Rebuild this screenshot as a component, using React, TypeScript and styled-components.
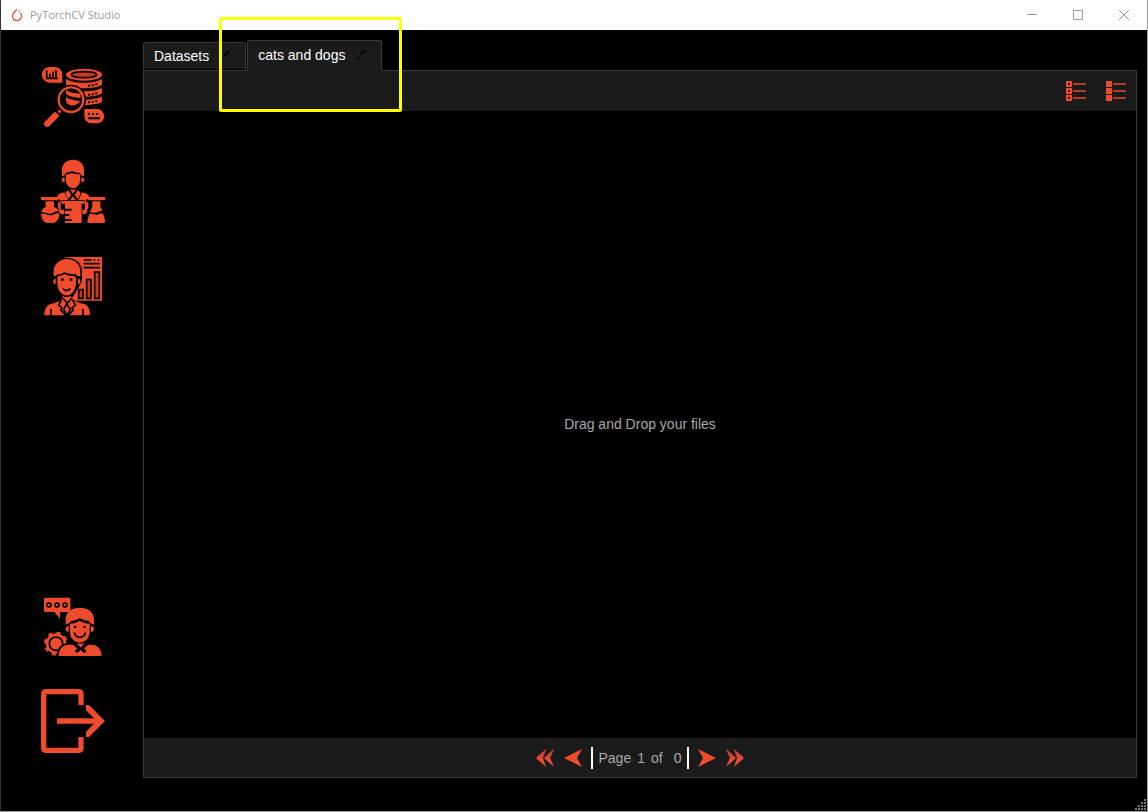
import React from "react";
import styled, { createGlobalStyle } from "styled-components";

const accent = "#ee4c2c";
const panel = "#1b1b1b";
const line = "#3a3a3a";

const GlobalStyle = createGlobalStyle`
  * { box-sizing: border-box; }
  body { margin: 0; background: #000; font-family: "Liberation Sans", Arial, sans-serif; font-size: 14px; }
  button { font: inherit; color: inherit; background: none; border: 0; padding: 0; cursor: pointer; }
  svg { display: block; }
`;

const Window = styled.div`
  position: relative;
  min-height: 100vh;
  display: flex;
  flex-direction: column;
  background: #000;
  border: 1px solid #a0a0a0;
  border-top: 0;
  border-left-color: #333;
`;

const TitleBar = styled.header`
  height: 30px;
  display: flex;
  align-items: center;
  gap: 7px;
  padding-left: 10px;
  background: #fff;
  color: #999;
`;

const Title = styled.h1`
  flex: 1;
  margin: 0;
  font: 400 11px/16px "Open Sans", "Segoe UI", sans-serif;
`;

const WindowButton = styled.button`
  width: 46px;
  height: 30px;
  display: grid;
  place-items: center;
`;

const WindowButtons = styled.div`
  display: flex;
`;

const Body = styled.div`
  flex: 1;
  display: flex;
`;

const Sidebar = styled.nav`
  width: 142px;
  display: flex;
  flex-direction: column;
  justify-content: space-between;
  padding: 35px 38px 58px 40px;
`;

const NavGroup = styled.div`
  display: flex;
  flex-direction: column;
  gap: 30px;
`;

const NavButton = styled.button`
  width: 64px;
  height: 64px;
`;

const Main = styled.main`
  flex: 1;
  display: flex;
  flex-direction: column;
  padding: 10px 10px 33px 0;
`;

const Tabs = styled.div`
  display: flex;
  align-items: flex-end;
  gap: 1px;
`;

const Tab = styled.div<{ $active?: boolean }>`
  position: relative;
  z-index: 1;
  display: flex;
  align-items: center;
  height: ${(p) => (p.$active ? 31 : 28)}px;
  margin-bottom: ${(p) => (p.$active ? -1 : 0)}px;
  padding: 0 14px ${(p) => (p.$active ? 2 : 0)}px 10px;
  gap: 10px;
  color: #fff;
  background: ${panel};
  border: 1px solid ${line};
  border-bottom-color: ${(p) => (p.$active ? panel : "#000")};
  border-radius: 2px 2px 0 0;
`;

const TabLabel = styled.button`
  line-height: 16px;
`;

const Pane = styled.section`
  flex: 1;
  display: flex;
  flex-direction: column;
  border: 1px solid ${line};
`;

const Toolbar = styled.div`
  height: 40px;
  display: flex;
  align-items: center;
  justify-content: flex-end;
  gap: 20px;
  padding-right: 10px;
  background: ${panel};
`;

const IconButton = styled.button`
  width: 20px;
  height: 20px;
`;

const DropArea = styled.div`
  flex: 1;
  display: grid;
  place-items: center;
  padding-bottom: 2px;
  color: #a9a9a9;
`;

const Pager = styled.footer`
  height: 39px;
  display: flex;
  align-items: center;
  justify-content: center;
  gap: 8px;
  background: ${panel};
  color: #a9a9a9;
`;

const PagerText = styled.div`
  display: flex;
  gap: 6px;
  height: 22px;
  align-items: center;
  padding: 0 6px;
  border: solid #fff;
  border-width: 0 2px;
`;

const Total = styled.span`
  padding-left: 5px;
`;

const Highlight = styled.div`
  position: absolute;
  z-index: 2;
  left: 218px;
  top: 17px;
  width: 183px;
  height: 95px;
  border: 3px solid #ff0;
  border-radius: 2px;
  pointer-events: none;
`;

const Grip = styled.svg`
  position: absolute;
  right: 0;
  bottom: 0;
`;

const Art = ({ box, children }: { box: string; children: React.ReactNode }) => (
  <svg width="64" height="64" viewBox={box} fill={accent} aria-hidden="true">
    {children}
  </svg>
);

const DatasetIcon = () => (
  <Art box="33 30 192 192">
    <path d="M59 36h15a23 23 0 0 1 23 23v24H59a23 23 0 0 1 0-47z" />
    <path d="M50 46v24h34M60 68V56M69 68V50M78 68V46" stroke="#000" strokeWidth="5" fill="none" />
    <ellipse cx="162" cy="59" rx="54" ry="18" />
    <ellipse cx="162" cy="59" rx="38" ry="9" fill="#c43b22" stroke="#000" strokeWidth="5" />
    <path d="M108 71c20 16 88 16 108 0v18c-16 13-92 16-108 0z" />
    <path d="M108 98c20 14 88 14 108 0v17c-16 13-92 16-108 0z" />
    <path d="M108 124c20 14 88 14 108 0v16c-16 12-92 15-108 0z" />
    <path d="M174 92h6M185 91h6M196 88h6M174 119h6M185 118h6M196 115h6M174 142h6M185 141h6M196 138h6" stroke="#000" strokeWidth="6" />
    <circle cx="123" cy="134" r="45" fill="#000" />
    <path d="M108 104c10 8 24 11 44 12v13c-18-1-34-4-44-12zM108 126c10 8 26 11 43 12-8 12-20 15-30 13-8-3-13-8-13-13z" />
    <circle cx="123" cy="134" r="37" fill="none" stroke={accent} strokeWidth="7" />
    <path d="M84 174l7-7" stroke={accent} strokeWidth="9" />
    <path d="M52 206l25-25" stroke={accent} strokeWidth="19" strokeLinecap="round" />
    <path d="M76 166l16 16" stroke="#000" strokeWidth="5" />
    <path d="M163 162h38a21 21 0 0 1 0 43h-17a21 21 0 0 1-21-21z" />
    <path d="M174 177h6M186 177h6M198 177h6M174 190h36" stroke="#000" strokeWidth="6" />
  </Art>
);

const ExperimentIcon = () => (
  <Art box="33 27 192 192">
    <path d="M96 79V59c0-18 14-30 33-30s33 12 33 30v20l-9-3-4-8c-10 0-18-2-23-6-5 4-10 6-18 6l-4 8z" />
    <path d="M108 73c7 0 13-2 18-5 6 4 13 5 24 5v19c0 12-10 22-21 22s-21-10-21-22zM104 82v14c-6 0-9-3-9-7s3-7 9-7zM154 82v14c6 0 9-3 9-7s-3-7-9-7z" />
    <path d="M119 116c6 4 14 4 20 0l-10 15zM114 120l10 15-10 13-8-18zM144 120l-10 15 10 13 8-18zM129 138l8 12h-16z" />
    <path d="M81 140c3-7 11-11 22-13l11 24H92v28h10v14c-10 1-18-7-14-13l-4-6V157h6v-9h-9zM178 140c-3-7-11-11-22-13l-11 24h20v28h-8v14c10 1 18-7 14-13l4-6V157h-6v-9h9z" />
    <path d="M94 153h70v8h-9v59h-50v-7h20v-6h-20v-9h13v-6h-13v-10h20v-6h-20v-15H94z" />
    <path d="M33 141h52v10H33zM175 141h50v10h-50z" />
    <path d="M47 154h25v17c8 2 13 7 16 13-12-4-18 10-30 7-8-1-13-6-24-4 2-9 7-14 13-16z" />
    <path d="M34 191c12-3 17 5 27 5 11 0 15-9 27-6 1 17-9 31-27 31s-28-13-27-30z" />
    <path d="M187 154h24v16l7 14c-12-4-15 7-24 4l-14-1 7-17zM178 192c14-4 18 6 29 0 7-4 12-2 14 3l4 16c2 6-2 10-8 10h-37c-6 0-9-4-8-10z" />
  </Art>
);

const AnalysisIcon = () => (
  <Art box="33 24 192 192">
    <path d="M103 36h113v131H103z" />
    <path d="M161 45h24M191 45h5M203 45h5M161 56h48M161 68h48" stroke="#000" strokeWidth="5" />
    <path d="M146 134h13v26h-13zM170 104h13v56h-13zM194 81h14v79h-14z" stroke="#000" strokeWidth="5" fill="#c43b22" />
    <path d="M66 106V78c0-24 20-40 44-40s46 14 46 42v28l-11 20-17 29H96l-24-34z" fill="#000" />
    <path d="M71 94V78c0-21 18-36 40-36s40 15 40 36v16c-9 0-11-3-14-7-13 2-26-1-34-6-7 6-13 8-21 7-3 3-6 6-11 6z" />
    <path d="M84 93c8 0 14-2 20-6 9 5 19 7 29 6l5 6v20c-2 17-14 32-28 32s-27-15-28-32v-20zM77 101v17c-10-1-10-16 0-17zM144 101v17c10-1 10-16 0-17z" />
    <path d="M93 104h8M119 104h8" stroke="#000" strokeWidth="7" />
    <path d="M99 130c5 9 17 9 22 0" stroke="#000" strokeWidth="5" fill="none" />
    <path d="M43 211c0-23 10-34 28-36l20-8 8-10 12 10 12-10 8 10 22 8c18 2 27 13 27 36z" />
    <path d="M98 151c8 9 18 9 25 0l2 11-14 14-14-14z" />
    <path d="M63 192v20M159 192v20M94 164l-8 17 10 7-4 7 17 17M128 164l8 17-10 7 4 7-17 17M98 159l14 16 14-16M110 176l-9 18 10 17 10-17z" stroke="#000" strokeWidth="5" fill="none" />
  </Art>
);

const SupportIcon = () => (
  <Art box="33 30 192 192">
    <path d="M45 38h73q3 0 3 3v37q0 3-3 3H90v20L73 81H45q-3 0-3-3V41q0-3 3-3z" />
    <g fill="none" stroke="#000" strokeWidth="5">
      <circle cx="57" cy="60" r="6" />
      <circle cx="81" cy="60" r="6" />
      <circle cx="105" cy="60" r="6" />
    </g>
    <circle cx="78" cy="176" r="31" />
    <circle cx="78" cy="176" r="33" fill="none" stroke={accent} strokeWidth="6" strokeDasharray="13 13" />
    <circle cx="78" cy="176" r="20" fill="none" stroke="#000" strokeWidth="5" />
    <path d="M80 217c0-25 9-39 34-44l8-17h54l10 17c24 4 33 19 34 44z" fill="#000" />
    <path d="M107 119v-16c0-22 18-35 42-35s43 13 43 35v16l-12-5-4-7c-10 0-21-3-27-8-6 5-14 8-24 8l-7 7z" />
    <path d="M120 116c10-1 21-3 29-9 9 6 19 8 30 9v26c0 17-14 31-30 31s-29-14-29-31zM116 123v18c-12 0-12-18 0-18zM183 123v18c12 0 12-18 0-18z" />
    <path d="M132 126h7M160 126h7" stroke="#000" strokeWidth="6" />
    <path d="M133 142c4 20 29 20 33 0" stroke="#000" strokeWidth="5" fill="none" />
    <path d="M86 213c1-21 11-34 29-34h15l12 12-8 8 8 5 10-10 10 10 8-5-8-8 12-12h10c18 0 30 12 31 34z" />
    <path d="M139 173c8 4 16 4 24 0l-10 15z" />
  </Art>
);

const ExitIcon = () => (
  <Art box="33 33 192 192">
    <path d="M153 81V49q0-8-8-8H49q-8 0-8 8v160q0 8 8 8h96q8 0 8-8v-32M81 129h135" fill="none" stroke={accent} strokeWidth="16" />
    <path d="M168 81h9l48 48-48 48h-9v-16l32-32-32-32z" />
  </Art>
);

const CloseMark = () => (
  <svg width="12" height="12" viewBox="0 0 12 12" fill="none">
    <path d="M2 1l8 10" stroke="#2b2b2b" strokeWidth="1" />
    <path d="M10 1L5 6M4 8l-2 3" stroke="#050505" strokeWidth="2" />
  </svg>
);

const ListIcon = ({ filled }: { filled?: boolean }) => (
  <svg width="20" height="20" viewBox="0 0 20 20">
    {[0, 7, 14].map((y) => (
      <g key={y}>
        <rect x="1" y={y + 1} width="4" height="4" fill={filled ? accent : "#3a1810"} stroke={accent} strokeWidth="2" />
        <path d={`M7 ${y + 3}h13`} stroke="#b83c25" strokeWidth="2" />
      </g>
    ))}
  </svg>
);

const Arrow = ({ flip, double }: { flip?: boolean; double?: boolean }) => (
  <svg width="20" height="20" viewBox="0 0 20 20">
    <g transform={flip ? "matrix(-1 0 0 1 20 0)" : undefined}>
      {double ? (
        <>
          <path d="M1 10L11 1L8 10l3 9z" fill="#e84c35" />
          <path d="M4 10L11 1L8 10z" fill="#c8402f" />
          <path d="M9 10L19 1l-4 9 4 9z" fill="#e84c35" />
          <path d="M12 10L19 1l-4 9z" fill="#c8402f" />
        </>
      ) : (
        <path d="M1 10l18-9-5 9 5 9z" fill={accent} />
      )}
    </g>
  </svg>
);

export default function App() {
  return (
    <>
      <GlobalStyle />
      <Window>
        <TitleBar>
          <svg width="12" height="14" viewBox="0 0 12 14" fill="none">
            <path d="M6 1.500L2.800 4.800a4.500 4.500 0 1 0 6.400 0" stroke={accent} strokeWidth="1.4" />
            <circle cx="8.300" cy="3.300" r=".8" fill={accent} />
          </svg>
          <Title>PyTorchCV Studio</Title>
          <WindowButtons>
            <WindowButton aria-label="Minimize">
              <svg width="10" height="10" stroke="#999"><path d="M0 4.500h10" /></svg>
            </WindowButton>
            <WindowButton aria-label="Maximize">
              <svg width="10" height="10" stroke="#999" fill="none"><path d="M.5.5h9v9h-9z" /></svg>
            </WindowButton>
            <WindowButton aria-label="Close">
              <svg width="10" height="10" stroke="#999"><path d="M0 0l10 10M10 0L0 10" /></svg>
            </WindowButton>
          </WindowButtons>
        </TitleBar>
        <Body>
          <Sidebar>
            <NavGroup>
              <NavButton aria-label="Datasets"><DatasetIcon /></NavButton>
              <NavButton aria-label="Experiments"><ExperimentIcon /></NavButton>
              <NavButton aria-label="Analysis"><AnalysisIcon /></NavButton>
            </NavGroup>
            <NavGroup>
              <NavButton aria-label="Support"><SupportIcon /></NavButton>
              <NavButton aria-label="Exit"><ExitIcon /></NavButton>
            </NavGroup>
          </Sidebar>
          <Main>
            <Tabs>
              <Tab>
                <TabLabel>Datasets</TabLabel>
                <button aria-label="Close Datasets"><CloseMark /></button>
              </Tab>
              <Tab $active>
                <TabLabel>cats and dogs</TabLabel>
                <button aria-label="Close cats and dogs"><CloseMark /></button>
              </Tab>
            </Tabs>
            <Pane>
              <Toolbar>
                <IconButton aria-label="Clear selection"><ListIcon /></IconButton>
                <IconButton aria-label="Select all"><ListIcon filled /></IconButton>
              </Toolbar>
              <DropArea>Drag and Drop your files</DropArea>
              <Pager>
                <IconButton aria-label="First page"><Arrow double /></IconButton>
                <IconButton aria-label="Previous page"><Arrow /></IconButton>
                <PagerText>
                  <span>Page</span>
                  <span>1</span>
                  <span>of</span>
                  <Total>0</Total>
                </PagerText>
                <IconButton aria-label="Next page"><Arrow flip /></IconButton>
                <IconButton aria-label="Last page"><Arrow double flip /></IconButton>
              </Pager>
            </Pane>
          </Main>
        </Body>
        <Highlight />
        <Grip width="12" height="12" fill="#777">
          {[0, 1, 2, 3].map((row) =>
            [0, 1, 2, 3].filter((col) => col + row >= 3).map((col) => (
              <rect key={`${row}-${col}`} x={col * 3} y={row * 3} width="2" height="2" />
            ))
          )}
        </Grip>
      </Window>
    </>
  );
}
